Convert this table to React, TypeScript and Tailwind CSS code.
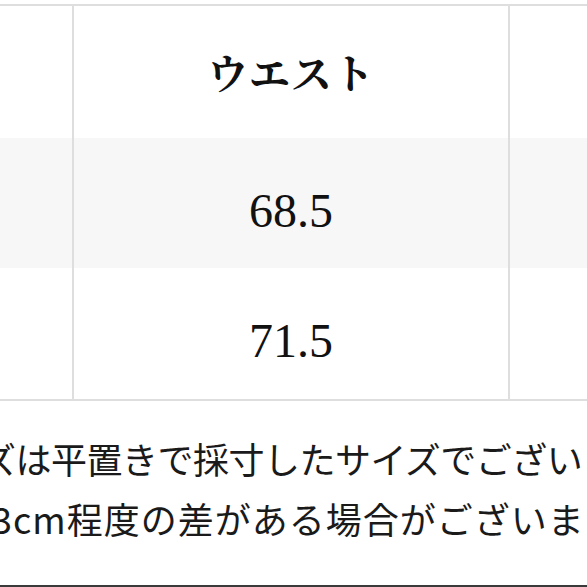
import React from "react";

export default function App() {
  return (
    <div className="w-[587px] h-[587px] overflow-hidden bg-white flex flex-col">
      <div className="h-[4px]" />
      <div className="border-t-2 border-b-2 border-[#dedede] flex flex-col">
        <div className="flex h-[132px] bg-white">
          <div className="w-[74px] border-r-2 border-[#dedede]" />
          <div className="w-[436px] border-r-2 border-[#dedede] flex items-center justify-center">
            <span className="text-[41px] font-bold tracking-[1px] text-[#111]" style={{ fontFamily: '"Noto Serif CJK JP", "Noto Sans CJK JP", serif' }}>
              ウエスト
            </span>
          </div>
          <div className="flex-1" />
        </div>
        <div className="flex h-[130px] bg-[#f7f7f7]">
          <div className="w-[74px] border-r-2 border-[#dedede]" />
          <div className="w-[436px] border-r-2 border-[#dedede] flex items-center justify-center pt-[15px]">
            <span className="text-[48px] text-[#111]" style={{ fontFamily: '"Liberation Serif", serif' }}>68.5</span>
          </div>
          <div className="flex-1" />
        </div>
        <div className="flex h-[131px] bg-white">
          <div className="w-[74px] border-r-2 border-[#dedede]" />
          <div className="w-[436px] border-r-2 border-[#dedede] flex items-center justify-center pt-[15px]">
            <span className="text-[48px] text-[#111]" style={{ fontFamily: '"Liberation Serif", serif' }}>71.5</span>
          </div>
          <div className="flex-1" />
        </div>
      </div>
      <div className="flex-1 flex flex-col pt-[27px] text-[36px] leading-[60px] text-[#1a1a1a] whitespace-nowrap" style={{ fontFamily: '"Noto Sans CJK JP", sans-serif' }}>
        <div className="ml-[-90px] tracking-[-0.5px]">サイズは平置きで採寸したサイズでございます。</div>
        <div className="ml-[-66px] tracking-[1px]">1〜3cm程度の差がある場合がございます。</div>
      </div>
      <div className="h-[2px] bg-[#3a3a3a]" />
    </div>
  );
}
